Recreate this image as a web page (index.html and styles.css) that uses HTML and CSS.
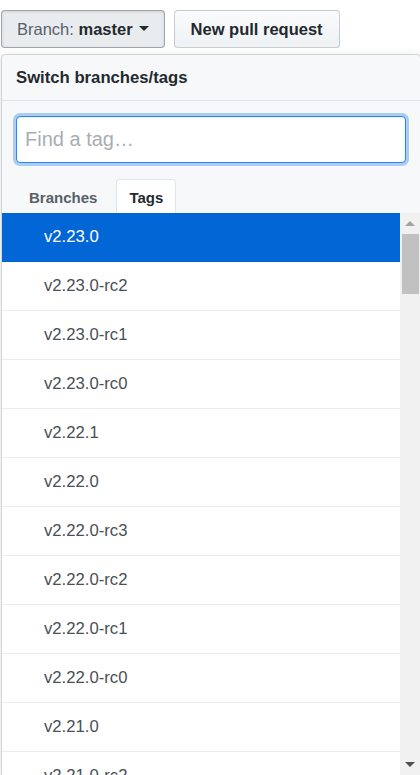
FILE: index.html
```html
<!DOCTYPE html>
<html lang="en">
<head>
    <meta charset="UTF-8">
    <meta name="viewport" content="width=device-width, initial-scale=1.0">
    <title>Switch branches/tags</title>
    <link rel="stylesheet" href="styles.css">
</head>
<body>
    <div class="page">
        <div class="toolbar">
            <button class="btn btn-selected" type="button">
                <span class="muted">Branch:</span> <strong>master</strong><span class="caret"></span>
            </button>
            <button class="btn" type="button"><strong>New pull request</strong></button>
        </div>

        <div class="select-menu">
            <div class="menu-header">Switch branches/tags</div>

            <div class="menu-filter">
                <input class="filter-input" type="text" placeholder="Find a tag…" autofocus>
            </div>

            <div class="menu-tabs">
                <span class="tab">Branches</span>
                <span class="tab tab-selected">Tags</span>
            </div>

            <div class="list-wrap">
                <ul class="menu-list">
                    <li class="menu-item navigation-focus">v2.23.0</li>
                    <li class="menu-item">v2.23.0-rc2</li>
                    <li class="menu-item">v2.23.0-rc1</li>
                    <li class="menu-item">v2.23.0-rc0</li>
                    <li class="menu-item">v2.22.1</li>
                    <li class="menu-item">v2.22.0</li>
                    <li class="menu-item">v2.22.0-rc3</li>
                    <li class="menu-item">v2.22.0-rc2</li>
                    <li class="menu-item">v2.22.0-rc1</li>
                    <li class="menu-item">v2.22.0-rc0</li>
                    <li class="menu-item">v2.21.0</li>
                    <li class="menu-item">v2.21.0-rc2</li>
                </ul>
                <div class="scrollbar">
                    <div class="scroll-btn"><span class="arrow-up"></span></div>
                    <div class="scroll-thumb"></div>
                    <div class="scroll-track"></div>
                    <div class="scroll-btn"><span class="arrow-down"></span></div>
                </div>
            </div>
        </div>
    </div>
</body>
</html>
```

FILE: styles.css
```css
html, body {
    margin: 0;
    height: 775px;
    overflow: hidden;
}

body {
    font-family: "Liberation Sans", Arial, sans-serif;
    background-color: #fff;
    color: #24292e;
}

.page {
    padding: 10px 0 0 1px;
    width: 420px;
}

.toolbar {
    display: flex;
    gap: 9px;
}

.btn {
    height: 38px;
    padding: 0 16px;
    font-family: inherit;
    font-size: 16.5px;
    line-height: 36px;
    color: #24292e;
    background-color: #eff3f6;
    background-image: linear-gradient(-180deg, #fafbfc 0%, #eff3f6 90%);
    border: 1px solid rgba(27, 31, 35, 0.2);
    border-radius: 4px;
    white-space: nowrap;
}

.btn-selected {
    background-color: #e9ecef;
    background-image: none;
    border-color: rgba(27, 31, 35, 0.35);
    box-shadow: inset 0 1px 3px rgba(27, 31, 35, 0.12);
    padding: 0 15px 0 15px;
}

.muted {
    color: #586069;
}

.caret {
    display: inline-block;
    width: 0;
    height: 0;
    margin-left: 6px;
    vertical-align: 4px;
    border-top: 5px solid #24292e;
    border-left: 5px solid transparent;
    border-right: 5px solid transparent;
}

.select-menu {
    margin-top: 6px;
    width: 420px;
    box-sizing: border-box;
    border: 1px solid #d1d5da;
    border-radius: 4px 4px 0 0;
    background-color: #f6f8fa;
    box-shadow: 0 3px 12px rgba(27, 31, 35, 0.15);
}

.menu-header {
    height: 45px;
    line-height: 46px;
    padding-left: 14px;
    font-size: 16.7px;
    font-weight: bold;
    color: #24292e;
    border-bottom: 1px solid #e1e4e8;
}

.menu-filter {
    padding: 15px 14px 0;
}

.filter-input {
    display: block;
    width: 100%;
    height: 47px;
    box-sizing: border-box;
    padding: 0 8px;
    font-family: inherit;
    font-size: 20px;
    color: #24292e;
    background: #fff;
    border: 1px solid #2188ff;
    border-radius: 4px;
    outline: none;
    box-shadow: inset 0 1px 2px rgba(27, 31, 35, 0.075), 0 0 0 3px rgba(3, 102, 214, 0.3);
}

.filter-input::placeholder {
    color: #a8adb3;
}

.menu-tabs {
    display: flex;
    align-items: flex-end;
    height: 50px;
    padding-left: 13px;
    gap: 5px;
}

.tab {
    height: 33px;
    line-height: 35px;
    padding: 0 13px;
    font-size: 15px;
    font-weight: bold;
    color: #586069;
    border: 1px solid transparent;
    border-bottom: 0;
    border-radius: 4px 4px 0 0;
}

.tab-selected {
    color: #24292e;
    background-color: #fff;
    border-color: #e1e4e8;
    padding: 0 12px;
}

.list-wrap {
    display: flex;
    height: 562px;
    overflow: hidden;
    background-color: #fff;
}

.menu-list {
    flex: 1;
    margin: 0;
    padding: 0;
    list-style: none;
}

.menu-item {
    height: 48px;
    line-height: 48px;
    padding-left: 42px;
    font-size: 16.7px;
    color: #4a4f55;
    border-bottom: 1px solid #eaecef;
}

.navigation-focus {
    color: #fff;
    background-color: #0366d6;
    border-bottom-color: #0366d6;
}

.scrollbar {
    width: 20px;
    flex-shrink: 0;
    display: flex;
    flex-direction: column;
    background-color: #f1f1f1;
}

.scroll-btn {
    height: 21px;
    display: flex;
    align-items: center;
    justify-content: center;
}

.scroll-thumb {
    height: 60px;
    margin: 0 1px 0 2px;
    background-color: #c1c1c1;
}

.scroll-track {
    flex: 1;
}

.arrow-up {
    border-bottom: 5px solid #a3a3a3;
    border-left: 5px solid transparent;
    border-right: 5px solid transparent;
}

.arrow-down {
    border-top: 5px solid #505050;
    border-left: 5px solid transparent;
    border-right: 5px solid transparent;
}
```
